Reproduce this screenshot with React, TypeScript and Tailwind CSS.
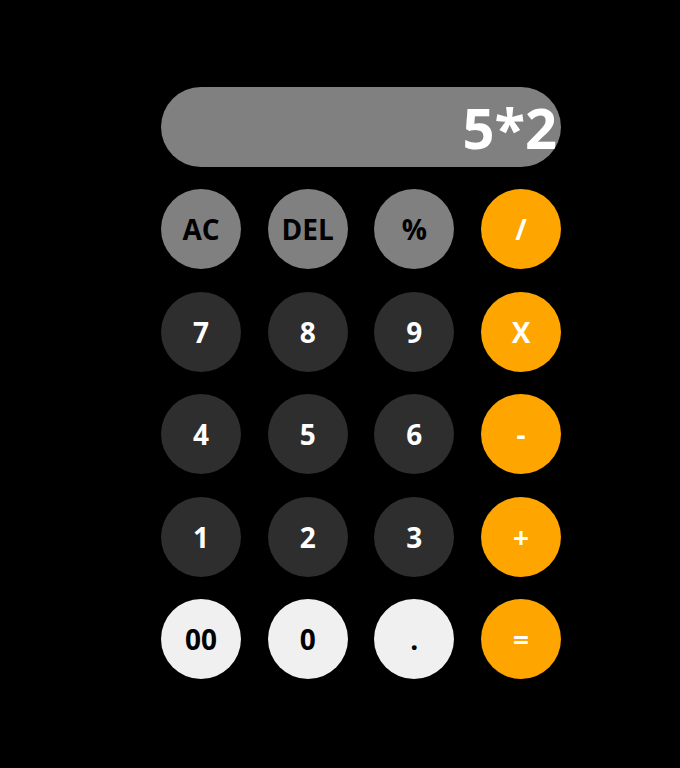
const keys: { label: string; kind: "fn" | "num" | "light" | "op" }[] = [
  { label: "AC", kind: "fn" },
  { label: "DEL", kind: "fn" },
  { label: "%", kind: "fn" },
  { label: "/", kind: "op" },
  { label: "7", kind: "num" },
  { label: "8", kind: "num" },
  { label: "9", kind: "num" },
  { label: "X", kind: "op" },
  { label: "4", kind: "num" },
  { label: "5", kind: "num" },
  { label: "6", kind: "num" },
  { label: "-", kind: "op" },
  { label: "1", kind: "num" },
  { label: "2", kind: "num" },
  { label: "3", kind: "num" },
  { label: "+", kind: "op" },
  { label: "00", kind: "light" },
  { label: "0", kind: "light" },
  { label: ".", kind: "light" },
  { label: "=", kind: "op" },
];

const styles = {
  fn: "bg-[#808080] text-black",
  num: "bg-[#2e2e2e] text-white",
  light: "bg-[#f0f0f0] text-black",
  op: "bg-[#ffa500] text-white",
};

export default function App() {
  return (
    <div
      className="min-h-[768px] bg-black pt-[87px] pl-[161px]"
      style={{ fontFamily: '"Open Sans", "Noto Sans", sans-serif' }}
    >
      <div className="w-[400px]">
        <div className="flex h-20 items-center justify-end overflow-hidden rounded-full bg-[#808080] pr-1">
          <span className="text-[56px] font-bold leading-none text-white">5*2</span>
        </div>
        <div className="mt-[22px] grid grid-cols-4 gap-x-[26.67px] gap-y-[22.5px]">
          {keys.map((k) => (
            <button
              key={k.label}
              className={`flex h-20 w-20 items-center justify-center rounded-full text-[28px] font-bold ${styles[k.kind]}`}
            >
              {k.label}
            </button>
          ))}
        </div>
      </div>
    </div>
  );
}
